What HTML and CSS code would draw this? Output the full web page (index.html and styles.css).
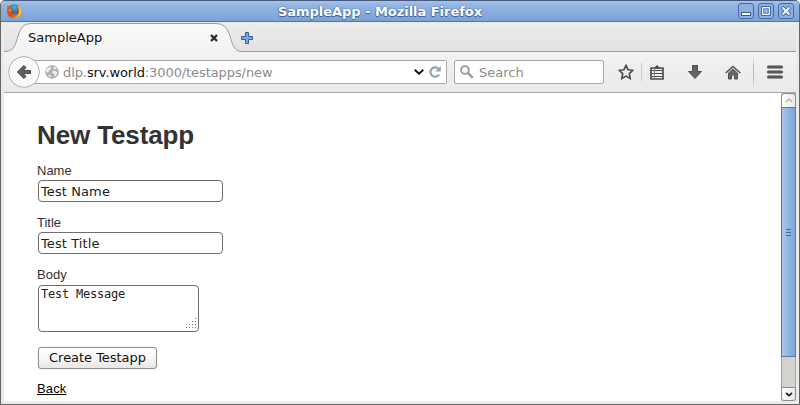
FILE: index.html
```
<!DOCTYPE html>
<html lang="en">
<head>
<meta charset="utf-8">
<title>SampleApp</title>
<link rel="stylesheet" href="styles.css">
</head>
<body>
<div class="window">
  <header class="titlebar">
    <svg class="firefox" width="16" height="16" viewBox="0 0 16 16">
      <defs>
        <linearGradient id="fox" x1="0" y1="0" x2="1" y2="1"><stop offset="0" stop-color="#e66a1c"/><stop offset=".55" stop-color="#dd481b"/><stop offset="1" stop-color="#ffc62e"/></linearGradient>
        <radialGradient id="globe" cx=".55" cy=".2" r=".8"><stop offset="0" stop-color="#43b6e2"/><stop offset="1" stop-color="#143264"/></radialGradient>
      </defs>
      <circle cx="8" cy="8" r="6.800" fill="url(#globe)"/>
      <path d="M1.700 2.200 3 3.500l2.600.2-.6 2 2.600.8-1.900 1.400.2 1.800 2.200.8 2-.7-1 1.800c2.400.2 3.600-1.800 3.300-4.500L11.500 4l.2-2c2.600 1.500 3.800 4 3.400 7-.5 3.800-3.300 6.300-7 6.300-4 0-7.100-3-7.200-7C.8 5.600 1.200 4 1.700 2.200Z" fill="url(#fox)"/>
      <path d="M11.800 2c2.500 1.700 3.700 4 3.300 7-.5 3.400-2.600 5.500-5.500 6.100 3-2 4.200-4.800 3.300-8.300Z" fill="#ffc832"/>
      <path d="m3 6 2.200 1-1.400 1.600L3 8Z" fill="#f5a52c"/>
    </svg>
    <div class="caption">SampleApp - Mozilla Firefox</div>
    <div class="controls">
      <svg width="16" height="16" viewBox="0 0 16 16"><rect class="wb" x=".5" y=".5" width="15" height="15" rx="2.500"/><path d="M3 11h10" stroke="#355b91" stroke-width="4"/><path d="M4 11h8" stroke="#fff" stroke-width="2"/></svg>
      <svg width="16" height="16" viewBox="0 0 16 16"><rect class="wb" x=".5" y=".5" width="15" height="15" rx="2.500"/><path d="M3.500 3.500h9v9h-9Z" fill="#8eb0df" stroke="#426da8"/><path d="M4.500 4.500h7v7h-7Z" fill="none" stroke="#eef4fc"/><path d="M6 6h4v4H6Z" fill="#a8c5e9" stroke="#5c84bb"/></svg>
      <svg width="16" height="16" viewBox="0 0 16 16"><rect class="wb" x=".5" y=".5" width="15" height="15" rx="2.500"/><path d="m4 4 8 8m0-8-8 8" stroke="#3e69a4" stroke-width="4"/><path d="m4.500 4.500 7 7m0-7-7 7" stroke="#edf4fd" stroke-width="2.200"/></svg>
    </div>
  </header>
  <div class="frame">
    <div class="tabs">
      <div class="tab">
        <svg class="tab-shape" width="238" height="31" viewBox="0 0 238 31"><defs><linearGradient id="tg" x2="0" y2="1"><stop stop-color="#fafaf9"/><stop offset="1" stop-color="#f3f2f1"/></linearGradient></defs><path d="M0 30V29.500C9 29.500 11 25 14 14 17 5 20 1.500 28 1.500H211C219 1.500 223 5 226 14 229 25 231 29.500 238 29.500V30Z" fill="url(#tg)"/><path d="M0 29.500C9 29.500 11 25 14 14 17 5 20 1.500 28 1.500H211C219 1.500 223 5 226 14 229 25 231 29.500 238 29.500" fill="none" stroke="#9b9b98"/></svg>
        <span class="tab-name">SampleApp</span>
        <svg class="tab-close" width="8" height="8" viewBox="0 0 8 8"><path d="m1 1 6 6m0-6-6 6" stroke="#222b2e" stroke-width="2.300"/></svg>
      </div>
      <svg class="plus" width="12" height="12" viewBox="0 0 12 12"><path d="M4.500.5h3v4h4v3h-4v4h-3v-4h-4v-3h4Z" fill="#7ba7de" stroke="#315f9b" stroke-linejoin="round"/></svg>
    </div>
    <nav class="toolbar">
      <svg class="back" width="32" height="32" viewBox="0 0 32 32"><circle cx="16" cy="16" r="15.400" fill="#f9f9f9" stroke="#a3afbf"/><path d="M23 16H11.500M17.200 10.300 11.500 16l5.700 5.700" fill="none" stroke="#4c4c4c" stroke-width="3.800"/><path d="M22.500 16H11.500M16.700 10.800 11.500 16l5.200 5.200" fill="none" stroke="#626262" stroke-width="2.200"/></svg>
      <div class="url">
        <svg class="site" width="14" height="14" viewBox="0 0 14 14"><circle cx="7" cy="7" r="6.800" fill="#b0b0b0"/><path d="m2 3.500 3-1.800 1.300 1-.8 1.800L4 5.500 3.500 7 2 7.800 1 6Zm6.500-1 1.600-.8 1.700 2-1.400.8-1.800-.5ZM7 6.500l2.300-1 3 1.700-.8 3-1.900 1.700L9.500 9 7.500 8.300Zm-3.500 3 2 .5.600 2.500-2.300-1Z" fill="#efefef"/></svg>
        <span class="address">dlp.<b>srv.world</b>:3000/testapps/new</span>
        <svg class="chevron" width="10" height="6" viewBox="0 0 10 6"><path d="m.7.700 4.300 4 4.300-4" fill="none" stroke="#111" stroke-width="1.900"/></svg>
        <svg class="reload" width="12" height="12" viewBox="0 0 12 12"><path d="M10 8.700A4.700 4.700 0 1 1 9 2.300" fill="none" stroke="#93a2b2" stroke-width="2.200"/><path d="M11.800 0v5.600H6.200Z" fill="#93a2b2"/></svg>
      </div>
      <div class="search">
        <svg width="14" height="14" viewBox="0 0 14 14"><circle cx="5" cy="5" r="3.900" fill="none" stroke="#999" stroke-width="1.900"/><path d="m8 8 4.800 4.800" stroke="#999" stroke-width="2.400"/></svg>
        <span>Search</span>
      </div>
      <svg class="star" width="16" height="16" viewBox="0 0 16 16"><path d="m8 1.400 2 4.300 4.800.6-3.500 3.300.9 4.900L8 12.100l-4.200 2.400.9-4.900-3.500-3.300L6 5.700Z" fill="none" stroke="#4b4b4b" stroke-width="1.600"/></svg>
      <i class="sep short"></i>
      <svg class="list" width="14" height="15" viewBox="0 0 14 15"><path d="M1 3h12v11H1Z" fill="#eee" stroke="#4b4b4b" stroke-width="1.700" stroke-linejoin="round"/><path d="M3.500 3.500 7 0l3.500 3.500Z" fill="#4b4b4b"/><path d="M2 5.500h10M2 8.500h10M2 11.500h10" stroke="#4b4b4b"/><path d="M4.500 4v9" stroke="#888"/></svg>
      <svg class="down" width="14" height="14" viewBox="0 0 14 14"><path d="M4.500.5h5v6h4L7 13.500.5 6.500h4Z" fill="#666" stroke="#4c4c4c" stroke-linejoin="round"/></svg>
      <svg class="home" width="16" height="15" viewBox="0 0 16 15"><path d="M3.500 8 8 4l4.500 4v6H9.500v-4h-3v4h-3Z" fill="#686868" stroke="#505050"/><path d="M.7 8 8 1.400 15.300 8" fill="none" stroke="#505050" stroke-width="1.500"/></svg>
      <i class="sep"></i>
      <svg class="menu" width="16" height="14" viewBox="0 0 16 14"><path d="M1.500 2h13M1.500 7h13M1.500 12h13" stroke="#484848" stroke-width="3" stroke-linecap="round"/><path d="M1 2h14M1 7h14M1 12h14" stroke="#646464"/></svg>
    </nav>
    <div class="viewport">
      <main class="page">
        <h1>New Testapp</h1>
        <form>
          <div class="field"><label for="name">Name</label><input id="name" type="text" value="Test Name"></div>
          <div class="field"><label for="title">Title</label><input id="title" type="text" value="Test Title"></div>
          <div class="field body"><label for="body">Body</label>
            <div class="area"><textarea id="body">Test Message</textarea>
            <svg class="grip" width="11" height="11" viewBox="0 0 11 11"><path d="M10 .5h1M7 3.500h1m2 0h1M4 6.500h1m2 0h1m2 0h1M1 9.500h1m2 0h1m2 0h1m2 0h1" stroke="#777"/></svg></div>
          </div>
          <button type="button">Create Testapp</button>
        </form>
        <a href="#">Back</a>
      </main>
      <div class="scrollbar">
        <div class="arrow up"><svg width="8" height="5" viewBox="0 0 8 5"><path d="m1 4 3-3 3 3" fill="none" stroke="#b2b2ae" stroke-width="1.300"/></svg></div>
        <div class="thumb"><i></i><i></i><i></i></div>
        <div class="track"></div>
        <div class="arrow"><svg width="8" height="5" viewBox="0 0 8 5"><path d="m1 1 3 2.700L7 1" fill="none" stroke="#222" stroke-width="1.700"/></svg></div>
      </div>
    </div>
  </div>
</div>
</body>
</html>
```
FILE: styles.css
```
* { box-sizing: border-box; }
html { background: #fff; }
body { margin: 0; width: 800px; height: 405px; overflow: hidden; font: 13px "DejaVu Sans", sans-serif; }
svg { display: block; flex: none; }
.window { width: 800px; height: 405px; display: flex; flex-direction: column; background: #edebe9; border: 1px solid #666462; border-top-color: #46597a; border-radius: 5px 5px 0 0; overflow: hidden; }
.titlebar { height: 21px; flex: none; display: flex; align-items: center; padding: 0 5px; background: linear-gradient(#a5c2ea, #94b5e3 20%, #7ca2d4); border-bottom: 1px solid #4f75aa; color: #fff; }
.caption { flex: 1; text-align: center; font-weight: bold; line-height: 20px; padding-top: 1px; letter-spacing: -.03px; text-shadow: 0 0 1px #345c93, 0 1px 1px #345c93, 0 0 1px #345c93; }
.controls { display: flex; gap: 4px; }
.wb { fill: #8eb0df; stroke: #416ca7; }
.frame { flex: 1; min-height: 0; padding: 0 3px 3px; display: flex; flex-direction: column; }
.tabs { height: 30px; flex: none; display: flex; background: linear-gradient(#edecea, #e3e2e0); border-bottom: 1px solid #9b9b98; }
.tab { position: relative; width: 238px; height: 30px; display: flex; align-items: center; padding: 1px 20px 0 24px; }
.tab-shape { position: absolute; left: 0; top: 0; }
.tab-name { position: relative; flex: 1; color: #111; }
.tab-close { position: relative; margin-right: 4px; }
.plus { margin: 10px 0 0 -1px; }
.toolbar { height: 41px; flex: none; display: flex; align-items: center; background: linear-gradient(#f3f2f1, #ebeae8); border-bottom: 1px solid #aaa9a6; padding-left: 4px; color: #8b8b8b; }
.back { position: relative; }
.url { width: 423px; height: 24px; margin-left: -16px; border: 1px solid #aaa9a6; border-radius: 2px; background: #fff; display: flex; align-items: center; padding: 0 5px 0 20px; }
.address { flex: 1; margin-left: 4px; white-space: nowrap; letter-spacing: -.09px; }
.address b { font-weight: normal; color: #111; }
.chevron { margin-right: 5px; }
.search { width: 150px; height: 24px; margin-left: 7px; border: 1px solid #aaa9a6; border-radius: 2px; background: #fff; display: flex; align-items: center; gap: 5px; padding-left: 5px; }
.star { margin-left: 14px; }
.sep { flex: none; width: 1px; height: 32px; margin-left: 12px; background: linear-gradient(transparent, #b4bcc6 30%, #b4bcc6 70%, transparent); }
.sep.short { height: 18px; margin-left: 7px; background: #c5cbd1; }
.list { margin-left: 8px; }
.down { margin-left: 24px; }
.home { margin-left: 23px; }
.menu { margin-left: 13px; }
.viewport { flex: 1; min-height: 0; display: flex; background: #fff; }
.page { flex: 1; padding: 26px 33px 0; color: #333; font: 13px/18px "Liberation Sans", Arial, sans-serif; }
h1 { margin: 0 0 10px; font-size: 26px; line-height: 33px; font-weight: bold; letter-spacing: -.13px; }
.field { height: 42px; margin-bottom: 10px; }
label { display: block; height: 18px; }
input { display: block; width: 185px; height: 22px; margin: 0 0 0 1px; padding: 0 2px; border: 1px solid #716e6b; border-radius: 4px; font: 13px "DejaVu Sans", sans-serif; letter-spacing: .1px; color: #222; background: #fff; }
.field.body { height: 67px; margin-bottom: 14px; }
.area { position: relative; width: 161px; height: 47px; margin: 1px 0 0 1px; }
textarea { display: block; width: 161px; height: 47px; padding: 1px 2px; border: 1px solid #716e6b; border-radius: 4px; resize: none; overflow: hidden; font: 12px/15px "DejaVu Sans Mono", monospace; letter-spacing: -.22px; color: #222; }
.grip { position: absolute; right: 3px; bottom: 3px; }
button { display: block; width: 119px; height: 22px; margin: 0 0 11px 1px; padding: 0 0 2px; border: 1px solid #92908d; border-radius: 3px; background: linear-gradient(#fff, #f8f8f7 50%, #e7e6e4); font: 13px "DejaVu Sans", sans-serif; letter-spacing: -.04px; color: #111; box-shadow: 0 0 1px #aaa; }
a { color: #000; text-decoration: underline; letter-spacing: .15px; }
.scrollbar { width: 15px; flex: none; display: flex; flex-direction: column; background: #d4d3d0; }
.arrow { height: 14px; border: 1px solid #8c8b87; border-radius: 0 0 3px 3px; background: linear-gradient(90deg, #fff, #e9e8e5); display: flex; align-items: center; justify-content: center; }
.arrow.up { border-radius: 3px 3px 0 0; border-bottom: 0; }
.thumb { height: 250px; border: 1px solid #5179b0; background: linear-gradient(90deg, #a8c6ed, #7fa4d7); display: flex; flex-direction: column; align-items: center; justify-content: center; gap: 2px; }
.thumb i { width: 5px; height: 1px; background: #416ca7; }
.track { flex: 1; border: solid #a3a19e; border-width: 0 1px; }
```
